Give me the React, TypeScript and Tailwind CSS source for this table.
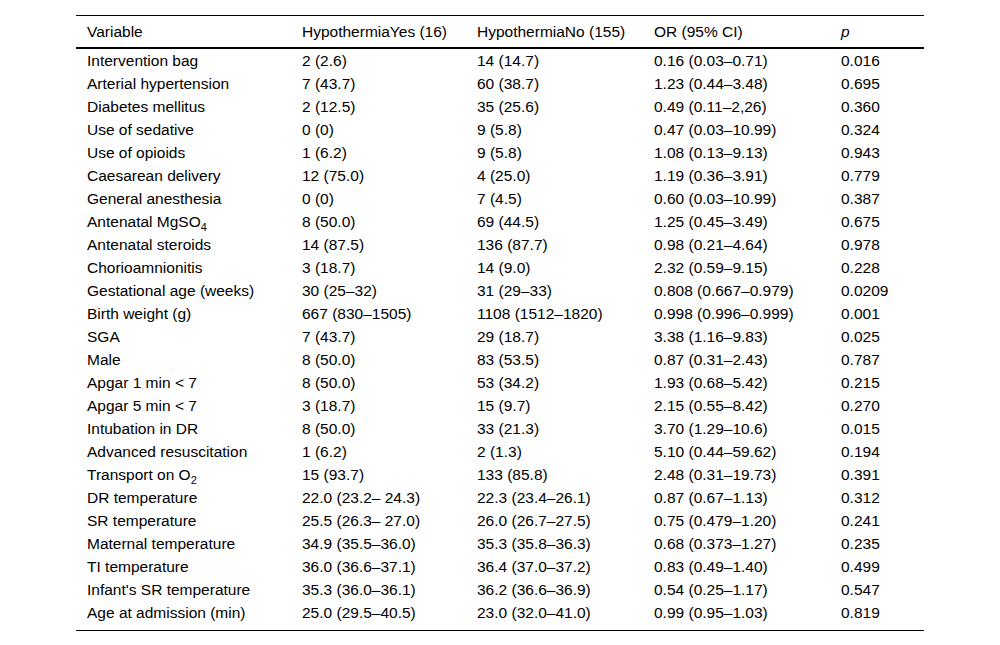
import React from "react";

type Row = [React.ReactNode, string, string, string, string];

const rows: Row[] = [
  ["Intervention bag", "2 (2.6)", "14 (14.7)", "0.16 (0.03–0.71)", "0.016"],
  ["Arterial hypertension", "7 (43.7)", "60 (38.7)", "1.23 (0.44–3.48)", "0.695"],
  ["Diabetes mellitus", "2 (12.5)", "35 (25.6)", "0.49 (0.11–2,26)", "0.360"],
  ["Use of sedative", "0 (0)", "9 (5.8)", "0.47 (0.03–10.99)", "0.324"],
  ["Use of opioids", "1 (6.2)", "9 (5.8)", "1.08 (0.13–9.13)", "0.943"],
  ["Caesarean delivery", "12 (75.0)", "4 (25.0)", "1.19 (0.36–3.91)", "0.779"],
  ["General anesthesia", "0 (0)", "7 (4.5)", "0.60 (0.03–10.99)", "0.387"],
  [
    <>
      Antenatal MgSO<sub className="text-[11px] relative top-[4px] align-baseline">4</sub>
    </>,
    "8 (50.0)",
    "69 (44.5)",
    "1.25 (0.45–3.49)",
    "0.675",
  ],
  ["Antenatal steroids", "14 (87.5)", "136 (87.7)", "0.98 (0.21–4.64)", "0.978"],
  ["Chorioamnionitis", "3 (18.7)", "14 (9.0)", "2.32 (0.59–9.15)", "0.228"],
  ["Gestational age (weeks)", "30 (25–32)", "31 (29–33)", "0.808 (0.667–0.979)", "0.0209"],
  ["Birth weight (g)", "667 (830–1505)", "1108 (1512–1820)", "0.998 (0.996–0.999)", "0.001"],
  ["SGA", "7 (43.7)", "29 (18.7)", "3.38 (1.16–9.83)", "0.025"],
  ["Male", "8 (50.0)", "83 (53.5)", "0.87 (0.31–2.43)", "0.787"],
  ["Apgar 1 min < 7", "8 (50.0)", "53 (34.2)", "1.93 (0.68–5.42)", "0.215"],
  ["Apgar 5 min < 7", "3 (18.7)", "15 (9.7)", "2.15 (0.55–8.42)", "0.270"],
  ["Intubation in DR", "8 (50.0)", "33 (21.3)", "3.70 (1.29–10.6)", "0.015"],
  ["Advanced resuscitation", "1 (6.2)", "2 (1.3)", "5.10 (0.44–59.62)", "0.194"],
  [
    <>
      Transport on O<sub className="text-[11px] relative top-[4px] align-baseline">2</sub>
    </>,
    "15 (93.7)",
    "133 (85.8)",
    "2.48 (0.31–19.73)",
    "0.391",
  ],
  ["DR temperature", "22.0 (23.2– 24.3)", "22.3 (23.4–26.1)", "0.87 (0.67–1.13)", "0.312"],
  ["SR temperature", "25.5 (26.3– 27.0)", "26.0 (26.7–27.5)", "0.75 (0.479–1.20)", "0.241"],
  ["Maternal temperature", "34.9 (35.5–36.0)", "35.3 (35.8–36.3)", "0.68 (0.373–1.27)", "0.235"],
  ["TI temperature", "36.0 (36.6–37.1)", "36.4 (37.0–37.2)", "0.83 (0.49–1.40)", "0.499"],
  ["Infant's SR temperature", "35.3 (36.0–36.1)", "36.2 (36.6–36.9)", "0.54 (0.25–1.17)", "0.547"],
  ["Age at admission (min)", "25.0 (29.5–40.5)", "23.0 (32.0–41.0)", "0.99 (0.95–1.03)", "0.819"],
];

export default function App() {
  return (
    <div
      className="w-[1000px] h-[645px] bg-white pt-[15px] pl-[76px] text-black text-[15.5px]"
      style={{ fontFamily: '"Liberation Sans", Arial, sans-serif' }}
    >
      <table className="w-[848px] border-collapse table-fixed">
        <colgroup>
          <col className="w-[215px]" />
          <col className="w-[175px]" />
          <col className="w-[177px]" />
          <col className="w-[187px]" />
          <col className="w-[94px]" />
        </colgroup>
        <thead>
          <tr className="border-t border-black border-b-2 h-[32px]">
            <th className="text-left font-normal pl-[11px] pt-[1px] align-middle">Variable</th>
            <th className="text-left font-normal pl-[11px] pt-[1px] align-middle">HypothermiaYes (16)</th>
            <th className="text-left font-normal pl-[11px] pt-[1px] align-middle">HypothermiaNo (155)</th>
            <th className="text-left font-normal pl-[11px] pt-[1px] align-middle">OR (95% CI)</th>
            <th className="text-left font-normal pl-[11px] pt-[1px] align-middle italic">p</th>
          </tr>
        </thead>
        <tbody className="border-b border-black">
          {rows.map((r, i) => (
            <tr key={i} className={i === rows.length - 1 ? "h-[30px]" : "h-[23px]"}>
              {r.map((c, j) => (
                <td key={j} className="pl-[11px] pt-[1px] whitespace-nowrap leading-[22px] align-top">
                  {c}
                </td>
              ))}
            </tr>
          ))}
        </tbody>
      </table>
    </div>
  );
}
